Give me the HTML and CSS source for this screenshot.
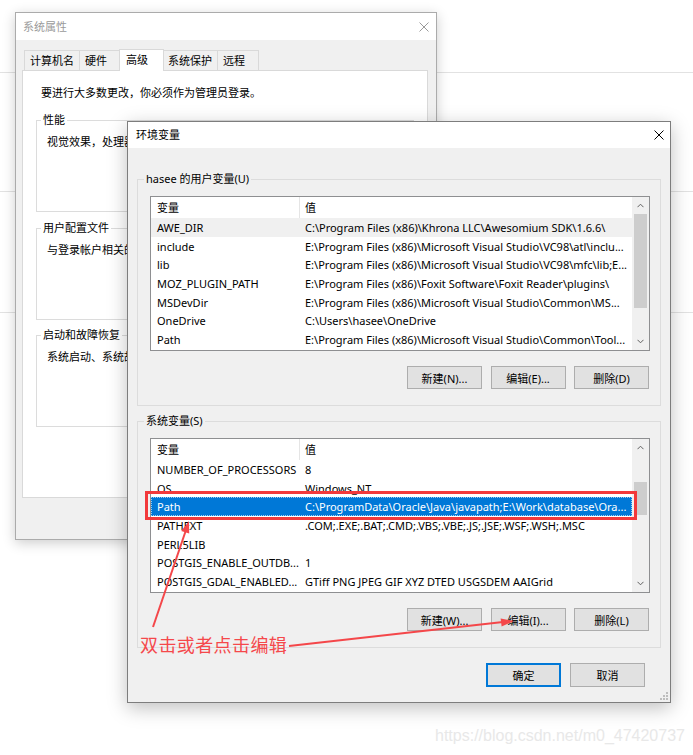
FILE: index.html
```html
<!DOCTYPE html>
<html>
    <head>
        <title>环境变量</title>
        <link rel="stylesheet" href="styles.css">
    </head>
    <body>
        <!-- page behind the windows -->
        <div class="backdrop">
            <div class="band band1"></div>
            <div class="band band2"></div>
            <div class="band band3"></div>
        </div>

        <!-- 系统属性 window (inactive) -->
        <div class="window sysprop">
            <div class="titlebar">
                <span>系统属性</span>
                <svg class="close" width="10" height="10" viewBox="0 0 10 10"><path d="M0.5 0.5L9.5 9.5M9.5 0.5L0.5 9.5" stroke="#9a9a9a" stroke-width="1"/></svg>
            </div>
            <div class="sysbody">
                <div class="tabs">
                    <div class="tab first">计算机名</div>
                    <div class="tab">硬件</div>
                    <div class="tab on">高级</div>
                    <div class="tab">系统保护</div>
                    <div class="tab">远程</div>
                </div>
                <div class="panel">
                    <p class="note">要进行大多数更改，你必须作为管理员登录。</p>
                    <div class="group">
                        <div class="gtitle">性能</div>
                        <p class="gtext">视觉效果，处理器计划，内存使用，以及虚拟内存</p>
                    </div>
                    <div class="group">
                        <div class="gtitle">用户配置文件</div>
                        <p class="gtext">与登录帐户相关的桌面设置</p>
                    </div>
                    <div class="group last">
                        <div class="gtitle">启动和故障恢复</div>
                        <p class="gtext">系统启动、系统故障和调试信息</p>
                    </div>
                </div>
            </div>
        </div>

        <!-- 环境变量 window (active) -->
        <div class="window envvar">
            <div class="titlebar">
                <span>环境变量</span>
                <svg class="close" width="10" height="10" viewBox="0 0 10 10"><path d="M0.5 0.5L9.5 9.5M9.5 0.5L0.5 9.5" stroke="#000" stroke-width="1"/></svg>
            </div>
            <div class="envbody">
                <div class="egroup">
                    <div class="gtitle">hasee 的用户变量(U)</div>
                    <div class="listview">
                        <div class="lv-main">
                            <div class="lv-head"><span class="c1">变量</span><span class="c2">值</span></div>
                            <div class="lv-row hover"><span class="c1">AWE_DIR</span><span class="c2">C:\Program Files (x86)\Khrona LLC\Awesomium SDK\1.6.6\</span></div>
                            <div class="lv-row"><span class="c1">include</span><span class="c2">E:\Program Files (x86)\Microsoft Visual Studio\VC98\atl\inclu...</span></div>
                            <div class="lv-row"><span class="c1">lib</span><span class="c2">E:\Program Files (x86)\Microsoft Visual Studio\VC98\mfc\lib;E...</span></div>
                            <div class="lv-row"><span class="c1">MOZ_PLUGIN_PATH</span><span class="c2">E:\Program Files (x86)\Foxit Software\Foxit Reader\plugins\</span></div>
                            <div class="lv-row"><span class="c1">MSDevDir</span><span class="c2">E:\Program Files (x86)\Microsoft Visual Studio\Common\MS...</span></div>
                            <div class="lv-row"><span class="c1">OneDrive</span><span class="c2">C:\Users\hasee\OneDrive</span></div>
                            <div class="lv-row"><span class="c1">Path</span><span class="c2">E:\Program Files (x86)\Microsoft Visual Studio\Common\Tool...</span></div>
                        </div>
                        <div class="scrollbar">
                            <div class="sb-arrow"><svg width="7" height="5" viewBox="0 0 7 5"><path d="M0.5 4.2L3.5 1.2L6.5 4.2" fill="none" stroke="#606060"/></svg></div>
                            <div class="sb-track"><div class="thumb user"></div></div>
                            <div class="sb-arrow"><svg width="7" height="5" viewBox="0 0 7 5"><path d="M0.5 0.8L3.5 3.8L6.5 0.8" fill="none" stroke="#606060"/></svg></div>
                        </div>
                    </div>
                    <div class="buttons">
                        <div class="btn">新建(N)...</div>
                        <div class="btn">编辑(E)...</div>
                        <div class="btn">删除(D)</div>
                    </div>
                </div>

                <div class="egroup second">
                    <div class="gtitle">系统变量(S)</div>
                    <div class="listview">
                        <div class="lv-main">
                            <div class="lv-head"><span class="c1">变量</span><span class="c2">值</span></div>
                            <div class="lv-row"><span class="c1">NUMBER_OF_PROCESSORS</span><span class="c2">8</span></div>
                            <div class="lv-row"><span class="c1">OS</span><span class="c2">Windows_NT</span></div>
                            <div class="lv-row selected"><span class="c1">Path</span><span class="c2">C:\ProgramData\Oracle\Java\javapath;E:\Work\database\Ora...</span></div>
                            <div class="lv-row"><span class="c1">PATHEXT</span><span class="c2">.COM;.EXE;.BAT;.CMD;.VBS;.VBE;.JS;.JSE;.WSF;.WSH;.MSC</span></div>
                            <div class="lv-row"><span class="c1">PERL5LIB</span><span class="c2"></span></div>
                            <div class="lv-row"><span class="c1">POSTGIS_ENABLE_OUTDB...</span><span class="c2">1</span></div>
                            <div class="lv-row"><span class="c1">POSTGIS_GDAL_ENABLED...</span><span class="c2">GTiff PNG JPEG GIF XYZ DTED USGSDEM AAIGrid</span></div>
                        </div>
                        <div class="scrollbar">
                            <div class="sb-arrow"><svg width="7" height="5" viewBox="0 0 7 5"><path d="M0.5 4.2L3.5 1.2L6.5 4.2" fill="none" stroke="#606060"/></svg></div>
                            <div class="sb-track"><div class="thumb sys"></div></div>
                            <div class="sb-arrow"><svg width="7" height="5" viewBox="0 0 7 5"><path d="M0.5 0.8L3.5 3.8L6.5 0.8" fill="none" stroke="#606060"/></svg></div>
                        </div>
                    </div>
                    <div class="buttons">
                        <div class="btn">新建(W)...</div>
                        <div class="btn">编辑(I)...</div>
                        <div class="btn">删除(L)</div>
                    </div>
                </div>

                <div class="footer">
                    <div class="btn big default">确定</div>
                    <div class="btn big">取消</div>
                </div>
            </div>
            <svg class="grip" width="8" height="8" viewBox="0 0 8 8">
                <rect x="6" y="0" width="2" height="2" fill="#bdbdbd"/>
                <rect x="3" y="3" width="2" height="2" fill="#bdbdbd"/>
                <rect x="6" y="3" width="2" height="2" fill="#bdbdbd"/>
                <rect x="0" y="6" width="2" height="2" fill="#bdbdbd"/>
                <rect x="3" y="6" width="2" height="2" fill="#bdbdbd"/>
                <rect x="6" y="6" width="2" height="2" fill="#bdbdbd"/>
            </svg>
        </div>

        <!-- red marks drawn over the screenshot -->
        <svg class="marks" width="693" height="755" viewBox="0 0 693 755">
            <rect x="146.5" y="492.5" width="489" height="26" fill="none" stroke="#f2393b" stroke-width="3"/>
            <path d="M153 627L186 530" stroke="#f4474a" stroke-width="2" fill="none"/>
            <polygon points="189,521 189.2,533.5 181.2,530.9" fill="#f4474a"/>
            <path d="M289 646L503 622" stroke="#f4474a" stroke-width="2" fill="none"/>
            <polygon points="514,621 501.6,626.6 500.6,618.4" fill="#f4474a"/>
        </svg>
        <div class="callout">双击或者点击编辑</div>

        <div class="watermark">https://blog.csdn.net/m0_47420737</div>
    </body>
</html>
```

FILE: styles.css
```css
body
{
    margin:0;
    width:693px;
    height:755px;
    position:relative;
    overflow:hidden;
    background-color:#fff;
    font-family:"Noto Sans", "Noto Sans CJK SC", sans-serif;
    font-size:11px;
    color:#000;
}
p
{
    margin:0;
}

/* page behind */
.band
{
    border-bottom:1px solid #e2e2e2;
}
.band1 { height:72px; }
.band2 { height:118px; }
.band3 { height:120px; }

/* windows */
.window
{
    position:absolute;
    box-sizing:border-box;
    display:flex;
    flex-direction:column;
    background-color:#f0f0f0;
}
.sysprop
{
    left:15px;
    top:12px;
    width:422px;
    height:528px;
    border:1px solid #ababab;
    box-shadow:0 3px 12px rgba(0,0,0,0.2);
}
.envvar
{
    left:127px;
    top:121px;
    width:544px;
    height:582px;
    border:1px solid #7d7d7d;
    box-shadow:0 5px 18px rgba(0,0,0,0.25);
}
.titlebar
{
    height:26px;
    flex-shrink:0;
    background-color:#fff;
    display:flex;
    align-items:center;
    justify-content:space-between;
    padding:0 6px 0 8px;
    line-height:14px;
}
.sysprop .titlebar
{
    padding:1px 7px 0;
    color:#9a9a9a;
}
.close
{
    display:block;
}

/* tabs of 系统属性 */
.sysbody
{
    padding:0 8px 0 6px;
}
.tabs
{
    display:flex;
    align-items:flex-end;
    height:21px;
    margin-top:9px;
    padding-left:2px;
    position:relative;
    z-index:1;
}
.tab
{
    box-sizing:border-box;
    min-width:42px;
    height:20px;
    line-height:19px;
    padding:0 5px;
    border:1px solid #d9d9d9;
    border-bottom:none;
    margin-left:-1px;
    background-color:#f0f0f0;
}
.tab.first
{
    margin-left:0;
}
.tab.on
{
    height:22px;
    min-width:45px;
    padding:0 6px;
    margin:0 -1px -1px -2px;
    background-color:#fff;
    position:relative;
}
.panel
{
    box-sizing:border-box;
    height:428px;
    background-color:#fff;
    border:1px solid #d9d9d9;
    padding:15px 13px 0;
    line-height:14px;
}
.note
{
    margin:0 0 20px 5px;
}
.group
{
    box-sizing:border-box;
    height:92px;
    border:1px solid #dcdcdc;
    margin-bottom:16px;
}
.group.last
{
    margin-top:-1px;
}
.gtitle
{
    width:fit-content;
    margin:-8px 0 0 4px;
    padding:0 2px;
    line-height:14px;
    background-color:#fff;
}
.gtext
{
    margin:8px 0 0 10px;
    white-space:nowrap;
}

/* 环境变量 body */
.envbody
{
    flex:1;
    padding:0 9px;
    display:flex;
    flex-direction:column;
}
.egroup
{
    border:1px solid #dcdcdc;
    margin-top:31px;
    padding:0 10px 16px 12px;
}
.egroup.second
{
    margin-top:15px;
}
.egroup .gtitle
{
    background-color:#f0f0f0;
    margin-left:-6px;
    margin-bottom:10px;
}
.listview
{
    box-sizing:border-box;
    height:155px;
    border:1px solid #8e8f91;
    background-color:#fff;
    display:flex;
}
.lv-main
{
    flex:1;
    overflow:hidden;
}
.lv-head
{
    display:flex;
    height:21px;
    line-height:21px;
}
.lv-row
{
    display:flex;
    height:18.67px;
    line-height:20.5px;
    overflow:hidden;
}
.c1
{
    box-sizing:border-box;
    width:149px;
    flex-shrink:0;
    padding-left:6px;
    white-space:nowrap;
    overflow:hidden;
}
.lv-head .c1
{
    border-right:1px solid #e5e5e5;
}
.c2
{
    flex:1;
    padding-left:5px;
    white-space:nowrap;
    overflow:hidden;
}
.lv-row.hover
{
    background-color:#f0f0f0;
}
.lv-row.selected
{
    background-color:#0078d7;
    color:#fff;
    outline:1px dotted #9ccbf0;
    outline-offset:-1px;
}
.scrollbar
{
    width:17px;
    flex-shrink:0;
    display:flex;
    flex-direction:column;
    background-color:#f0f0f0;
}
.sb-arrow
{
    height:17px;
    display:flex;
    align-items:center;
    justify-content:center;
}
.sb-track
{
    flex:1;
}
.thumb
{
    margin:0 2px;
    background-color:#cdcdcd;
}
.thumb.user
{
    height:94px;
}
.thumb.sys
{
    margin-top:26px;
    height:33px;
}
.buttons
{
    display:flex;
    justify-content:flex-end;
    gap:8.5px;
    margin:15px 1px 0 0;
}
.btn
{
    box-sizing:border-box;
    width:75px;
    height:23px;
    border:1px solid #adadad;
    background-color:#e1e1e1;
    display:flex;
    align-items:center;
    justify-content:center;
}
.footer
{
    display:flex;
    justify-content:flex-end;
    gap:9px;
    margin:15px 16px 0 0;
}
.btn.big
{
    height:24px;
}
.btn.default
{
    border:2px solid #0078d7;
}
.grip
{
    position:absolute;
    right:2px;
    bottom:2px;
}

/* annotation */
.marks
{
    position:absolute;
    left:0;
    top:0;
    pointer-events:none;
}
.callout
{
    position:absolute;
    left:140px;
    top:632px;
    font-family:"Noto Sans CJK SC", sans-serif;
    font-size:18px;
    line-height:24px;
    letter-spacing:0.4px;
    color:#f5484b;
}
.watermark
{
    position:absolute;
    left:435px;
    top:727px;
    font-family:"Liberation Sans", sans-serif;
    font-size:16px;
    color:#e8e8e8;
}
```
